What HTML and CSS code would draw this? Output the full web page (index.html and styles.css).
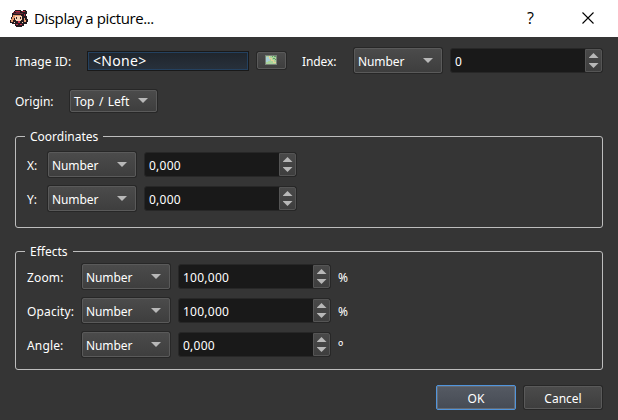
FILE: index.html
```html
<!DOCTYPE html>
<html lang="en">
<head>
<meta charset="utf-8">
<title>Display a picture...</title>
<link rel="stylesheet" href="styles.css">
</head>
<body>
<header class="titlebar">
  <svg class="app-icon" width="18" height="17" viewBox="0 0 18 17" shape-rendering="crispEdges">
    <path fill="#251b20" d="M5 0h6v1h2V0h3v1h1v3h-1v2h1v3h1v3h-1v2h-3v2h-2v1H6v-1H5v-2H2v-1H0v-3h1V7h1V3h1V2h1V1h1z"/>
    <path fill="#b42c42" d="M5 1h5v1H4v1H3V2h2zM12 1h3v1h-3zM14 4h1v2h-1z"/>
    <path fill="#6c2938" d="M4 3h9v1H4zM6 2h4v1H6z"/>
    <path fill="#e89a70" d="M3 5h8v1H5v2H4v2H3v2H1V9h1V7h1zM1 11h2v1H1zM14 8h1v2h1v2h-2z"/>
    <path fill="#f9d5b6" d="M5 6h7v4h-1v1H6v-1H5zM4 12h1v1H4zM12 12h1v1h-1z"/>
    <path fill="#3b2028" d="M6 7h1v2H6zM10 7h1v2h-1z"/>
    <path fill="#c8304e" d="M8 11h2v2H8zM6 14h2v1H6zM10 14h2v1h-2z"/>
  </svg>
  <h1 class="title">Display a picture...</h1>
  <span class="help">?</span>
  <svg class="close" width="12" height="12" viewBox="0 0 12 12"><path d="M.5.5l11 11M11.5.5l-11 11" stroke="#000" stroke-width="1.1"/></svg>
</header>
<main class="dialog">
  <div class="row top">
    <label class="l-image">Image ID:</label>
    <div class="edit">&lt;None&gt;</div>
    <button class="pick"><svg width="12" height="10" viewBox="0 0 12 10" shape-rendering="crispEdges"><path fill="#788078" d="M0 0h12v10H0z"/><path fill="#a9d39c" d="M1 1h10v8H1z"/><path fill="#a9cfd5" d="M1 2h3v2h1v2H3v1H1z"/><path fill="#e2d39a" d="M4 1h1v2h2v2h2v2h2v1H8V6H6V4H4z"/><path fill="#5d9b64" d="M7 1h1v1H7zM9 1h2v1H9zM8 3h2v1H8zM10 4h1v1h-1z"/></svg></button>
    <label class="l-index">Index:</label>
    <div class="combo"><span>Number</span><i class="down"></i></div>
    <div class="spin"><span>0</span><div class="steps"><i class="up"></i><i class="down"></i></div></div>
  </div>
  <div class="row origin">
    <label class="l-origin">Origin:</label>
    <div class="combo short"><span>Top / Left</span><i class="down"></i></div>
  </div>
  <fieldset class="group coords">
    <legend>Coordinates</legend>
    <div class="row"><label>X:</label><div class="combo"><span>Number</span><i class="down"></i></div><div class="spin"><span>0,000</span><div class="steps"><i class="up"></i><i class="down"></i></div></div></div>
    <div class="row"><label>Y:</label><div class="combo"><span>Number</span><i class="down"></i></div><div class="spin"><span>0,000</span><div class="steps"><i class="up"></i><i class="down"></i></div></div></div>
  </fieldset>
  <fieldset class="group effects">
    <legend>Effects</legend>
    <div class="row"><label>Zoom:</label><div class="combo"><span>Number</span><i class="down"></i></div><div class="spin"><span>100,000</span><div class="steps"><i class="up"></i><i class="down"></i></div></div><span class="unit">%</span></div>
    <div class="row"><label>Opacity:</label><div class="combo"><span>Number</span><i class="down"></i></div><div class="spin"><span>100,000</span><div class="steps"><i class="up"></i><i class="down"></i></div></div><span class="unit">%</span></div>
    <div class="row"><label>Angle:</label><div class="combo"><span>Number</span><i class="down"></i></div><div class="spin"><span>0,000</span><div class="steps"><i class="up"></i><i class="down"></i></div></div><span class="unit degree">º</span></div>
  </fieldset>
  <footer class="actions">
    <button class="btn ok">OK</button>
    <button class="btn">Cancel</button>
  </footer>
</main>
</body>
</html>
```
FILE: styles.css
```css
* { box-sizing: border-box; }
body {
  margin: 0;
  width: 618px;
  height: 420px;
  overflow: hidden;
  background: #353535;
  color: #fff;
  font: 12px/16px "Noto Sans", sans-serif;
}
.titlebar {
  height: 37px;
  background: #fff;
  color: #000;
  display: flex;
  align-items: center;
  padding: 0 24px 0 10px;
}
.app-icon { margin-top: -1px; }
.title {
  margin: -2px auto 0 6px;
  font: 15px/20px "Open Sans", sans-serif;
  letter-spacing: -0.4px;
}
.help { font: 16px/20px "Open Sans", sans-serif; margin: -2px 48px 0 0; }
.close { margin-top: -1px; }
.dialog { padding: 11px 15px 0; }
.row { display: flex; height: 25px; align-items: center; white-space: nowrap; }
label { flex: none; padding-top: 3px; }
.l-image { width: 72px; letter-spacing: 0.1px; }
.l-index { width: 52px; letter-spacing: -0.1px; }
.l-origin { width: 55px; }
.edit {
  width: 162px;
  height: 20px;
  border: 2px solid #191919;
  outline: 1px solid #24415f;
  outline-offset: -2px;
  background: linear-gradient(#20262d, #27303b);
  font-size: 14px;
  line-height: 16px;
  letter-spacing: 0.3px;
  padding-left: 4px;
  margin-right: 8px;
}
button { font: inherit; color: inherit; padding: 0; }
.pick, .combo, .btn {
  border: 1px solid #5a5a5a;
  border-radius: 2px;
  background: linear-gradient(#4b4b4b, #3e3e3e);
  box-shadow: 0 0 0 1px #272727;
}
.pick {
  width: 29px;
  height: 17px;
  margin-right: 16px;
  display: flex;
  align-items: center;
  justify-content: center;
}
.pick svg { margin: -2px 1px 0 0; }
.combo {
  width: 88px;
  height: 25px;
  flex: none;
  display: flex;
  align-items: center;
  justify-content: space-between;
  padding: 2px 8px 0 3px;
  margin-right: 8px;
  letter-spacing: -0.1px;
}
.combo.short { width: 87px; height: 22px; letter-spacing: 0; word-spacing: 1.3px; }
.combo .down { margin-top: -2px; }
.up, .down {
  width: 10px;
  height: 5px;
  background: #b8b8b8;
}
.down { clip-path: polygon(0 0, 100% 0, 50% 100%); }
.up { clip-path: polygon(0 100%, 100% 100%, 50% 0); }
.spin {
  width: 153px;
  height: 25px;
  flex: none;
  display: flex;
  border: 1px solid #272727;
  border-radius: 3px;
  background: #191919;
}
.spin > span { flex: 1; padding: 5px 0 0 4px; letter-spacing: 0.25px; }
.steps {
  width: 17px;
  border: 1px solid #555;
  border-radius: 0 2px 2px 0;
  background: linear-gradient(#494949, #3e3e3e);
  display: flex;
  flex-direction: column;
  align-items: center;
  justify-content: center;
  gap: 5px;
}
.origin { margin-top: 15px; }
.group {
  position: relative;
  margin: 23px 0 0;
  padding: 15px 11px 0;
  border: 1px solid #bdbdbd;
  border-radius: 3px;
  min-width: 0;
}
.group legend {
  position: absolute;
  top: -8px;
  left: 9px;
  padding: 0 5px;
  background: #353535;
}
.coords { height: 92px; }
.coords label { width: 21px; }
.effects { height: 119px; margin-top: 23px; padding-top: 12px; }
.effects label { width: 55px; letter-spacing: 0.15px; }
.group .row + .row { margin-top: 9px; }
.unit { padding: 3px 0 0 7px; }
.degree { font-size: 14px; }
.actions {
  display: flex;
  justify-content: flex-end;
  align-items: center;
  gap: 8px;
  margin-top: 15px;
  padding-right: 1px;
}
.btn { width: 78px; height: 23px; padding-top: 2px; }
.btn.ok {
  width: 80px;
  height: 25px;
  border-color: #5195dc;
  background: linear-gradient(#555a63, #464b54);
  box-shadow: inset 0 0 0 1px #656a72;
}
```
